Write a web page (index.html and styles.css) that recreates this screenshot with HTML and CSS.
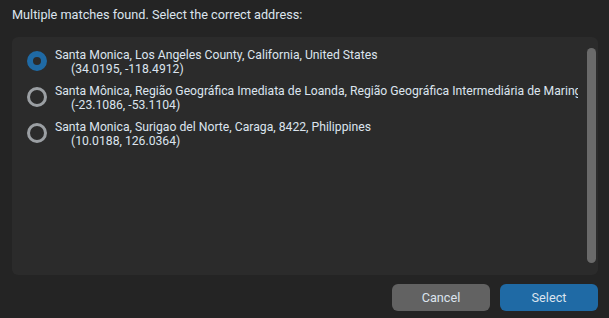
FILE: index.html
```html
<!DOCTYPE html>
<html>
<head>
<meta charset="utf-8">
<link rel="stylesheet" href="styles.css">
</head>
<body>
<div class="dialog">
  <div class="title">Multiple matches found. Select the correct address:</div>
  <div class="frame">
    <div class="list">
      <div class="row">
        <span class="radio checked"></span>
        <div class="label">
          <div class="line">Santa Monica, Los Angeles County, California, United States</div>
          <div class="line coords">(34.0195, -118.4912)</div>
        </div>
      </div>
      <div class="row">
        <span class="radio"></span>
        <div class="label">
          <div class="line">Santa Mônica, Região Geográfica Imediata de Loanda, Região Geográfica Intermediária de Maringá, Paraná, Região Sul, Brasil</div>
          <div class="line coords">(-23.1086, -53.1104)</div>
        </div>
      </div>
      <div class="row">
        <span class="radio"></span>
        <div class="label">
          <div class="line">Santa Monica, Surigao del Norte, Caraga, 8422, Philippines</div>
          <div class="line coords">(10.0188, 126.0364)</div>
        </div>
      </div>
    </div>
    <div class="scrollbar"></div>
  </div>
  <div class="buttons">
    <button class="btn cancel">Cancel</button>
    <button class="btn select">Select</button>
  </div>
</div>
</body>
</html>
```

FILE: styles.css
```css
html, body {
  margin: 0;
  padding: 0;
  background: #242424;
}
body {
  width: 609px;
  height: 318px;
  overflow: hidden;
  font-family: Roboto, "Liberation Sans", sans-serif;
  font-size: 12.2px;
  color: #dce4ee;
}
.dialog {
  display: flex;
  flex-direction: column;
  height: 318px;
  padding: 0 11px 0 12px;
  box-sizing: border-box;
}
.title {
  font-size: 12.7px;
  line-height: 16px;
  padding-top: 7px;
  height: 37px;
  box-sizing: border-box;
}
.frame {
  height: 238px;
  flex: none;
  background: #2b2b2b;
  border-radius: 6px;
  display: flex;
  box-sizing: border-box;
}
.list {
  flex: 1;
  min-width: 0;
  overflow: hidden;
  padding: 11px 0 0 15px;
  display: flex;
  flex-direction: column;
  gap: 8px;
}
.row {
  display: flex;
  align-items: center;
  gap: 8px;
  height: 28px;
}
.radio {
  flex: none;
  width: 20px;
  height: 20px;
  margin-bottom: 2px;
  border-radius: 50%;
  box-sizing: border-box;
  border: 3px solid #9b9fa3;
}
.radio.checked {
  border: 6px solid #1f6aa5;
}
.label {
  min-width: 0;
  line-height: 14px;
}
.line {
  white-space: nowrap;
}
.coords {
  padding-left: 16px;
}
.scrollbar {
  flex: none;
  width: 9px;
  margin: 11px 2px 12px 9px;
  border-radius: 5px;
  background: #6a6a6a;
}
.buttons {
  display: flex;
  justify-content: flex-end;
  gap: 10px;
  padding-top: 9px;
}
.btn {
  width: 98px;
  height: 27px;
  border: none;
  border-radius: 6px;
  font-family: Roboto, "Liberation Sans", sans-serif;
  font-size: 12.7px;
  color: #dce4ee;
  padding: 0;
}
.cancel {
  background: #626262;
}
.select {
  background: #1f6aa5;
}
```
